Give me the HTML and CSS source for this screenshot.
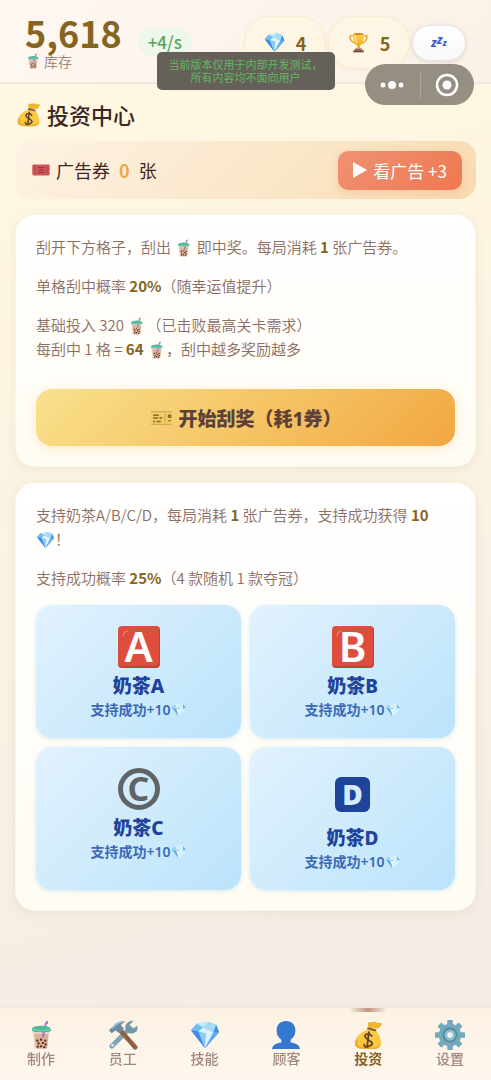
FILE: index.html
```html
<!DOCTYPE html>
<html lang="zh-CN">
<head>
    <meta charset="UTF-8">
    <meta name="viewport" content="width=device-width, initial-scale=1.0">
    <title>投资中心</title>
    <link rel="stylesheet" href="styles.css">
</head>
<body>
    <!-- Shared icons -->
    <svg class="sprite" aria-hidden="true">
        <defs>
            <linearGradient id="gem" x1="0" y1="0" x2="1" y2="1">
                <stop offset="0" stop-color="#8fd3f7"/>
                <stop offset="1" stop-color="#2f7fe0"/>
            </linearGradient>
            <linearGradient id="gold" x1="0" y1="0" x2="0" y2="1">
                <stop offset="0" stop-color="#ffd54a"/>
                <stop offset="1" stop-color="#f2a01f"/>
            </linearGradient>
        </defs>
        <symbol id="tea" viewBox="0 0 32 32">
            <path d="M7 11h18l-2 18q-.3 2-2 2h-10q-1.700 0-2-2z" fill="#e9d5c8"/>
            <path d="M9 15h15l-1.500 14q-.2 1.500-1.500 1.500h-9q-1.300 0-1.500-1.500z" fill="#deb193"/>
            <path d="M17 16 20.500 2.500q.3-1.500 3-1.500v3l-1.500.5L19 19h-2z" fill="#a77bc8"/>
            <path d="M6.500 9Q8 6 16.500 6T26 9l1 2q0 2-10.500 2T6 11z" fill="#4fb99a"/>
            <path d="M7 10q9 3 19 0" fill="none" stroke="#80d8bd"/>
            <g fill="#493029">
                <circle cx="12" cy="22" r="1.200"/><circle cx="16" cy="21" r="1.200"/><circle cx="20.500" cy="22" r="1.200"/>
                <circle cx="13.500" cy="25" r="1.200"/><circle cx="18" cy="24.500" r="1.200"/><circle cx="21" cy="26" r="1.200"/>
                <circle cx="12.500" cy="28.500" r="1.200"/><circle cx="16" cy="28" r="1.200"/><circle cx="19.500" cy="29" r="1.200"/>
            </g>
        </symbol>
        <symbol id="diamond" viewBox="0 0 32 32">
            <path d="M1 11 7 4 20 2l8 3 3 8-15 17z" fill="url(#gem)"/>
            <path d="M7 4 20 2l-6 6z" fill="#c7ecfc"/>
            <path d="M7 4 1 11l8 1 5-4z" fill="#71bdf0"/>
            <path d="m20 2 8 3-3 8-11-5z" fill="#a6dcf9"/>
            <path d="m28 5 3 8h-6z" fill="#4292e8"/>
            <path d="m9 12 5-4 11 5-9 17z" fill="#dcf3ff"/>
            <path d="m1 11 8 1 7 18z" fill="#3f8ae6"/>
            <path d="m9 12 8 2-1 16z" fill="#8ec9f8"/>
            <path d="m25 13 6 0-15 17z" fill="#61adf2"/>
        </symbol>
        <!-- the small gem is pale in the middle and nearly melts into the tile -->
        <symbol id="diamond-pale" viewBox="0 0 32 32">
            <path d="M1 11 7 4 20 2l8 3 3 8-15 17z" fill="#d3effb"/>
            <path d="m1 10 9 3 7-2-4 7 2 11z" fill="#63aee5"/>
            <path d="m1 10 7-5 3 6z" fill="#92cff0"/>
            <path d="m10 13 9 1-3 14z" fill="#e6f8fd"/>
            <path d="m24 4 6 8-6 1z" fill="#68b2e6"/>
        </symbol>
        <symbol id="bag" viewBox="0 0 32 32">
            <path d="M17 9Q14 2 18 2q2 1 3 0t3 0 2 1 4 0q2 2-3 6z" fill="#efb62b"/>
            <path d="M15 10Q2 16 2 25q0 6 11 6h8q10 0 9-7-1-8-6-13z" fill="#fbc93f"/>
            <path d="M5 25q0 4 10 4h8q5-1 6-4 0 6-8 6h-8Q2 31 2 25q0-3 3-6z" fill="#f0ad27"/>
            <path d="m16 9 8 2" stroke="#76513b" stroke-width="2" stroke-linecap="round"/>
            <path d="M20 17q-2-3-5-2t-2 3 3 3 4 3-3 4-5-2M17 13l-2 16" fill="none" stroke="#5f422c" stroke-width="1.900" stroke-linecap="round"/>
        </symbol>
        <symbol id="trophy" viewBox="0 0 32 32">
            <path d="M9 6H3q0 9 8 11M23 6h6q0 9-8 11" fill="none" stroke="#e99b27" stroke-width="2"/>
            <path d="M8 3h16q1 15-6 18v4h-4v-4Q7 18 8 3z" fill="url(#gold)"/>
            <path d="M11 5q0 9 3 12" fill="none" stroke="#ffeb91" stroke-width="2"/>
            <ellipse cx="16" cy="3" rx="8" ry="1.500" fill="#d98b1e"/>
            <path d="M11 25h10l1 3H10z" fill="#9b5f4b"/>
            <path d="M8 28h16v3H8z" fill="#704236"/>
        </symbol>
        <symbol id="coupon" viewBox="0 0 32 20">
            <path d="M3 1h26l2 2-1 2 1 2-1 2 1 2-1 2 1 3-2 3H3l-2-3 1-3-1-2 1-2-1-2 1-2-1-2z" fill="#cb555b"/>
            <path d="M6 4v12M26 4v12" stroke="#a43e45" stroke-width="1.500" stroke-dasharray="2 1"/>
            <path d="M11 6h10M12 10h8M11 14h10" stroke="#8e3037" stroke-width="1.600"/>
        </symbol>
        <symbol id="ticket" viewBox="0 0 32 20">
            <path d="M1 1h30v3l-1 1 1 1v8l-1 1 1 1v3H1v-3l1-1-1-1V6l1-1-1-1z" fill="#f3cd64"/>
            <path d="M1 1h30M1 19h30" stroke="#b7914a"/>
            <path d="M4 6h8M4 10h7m2 0h4M4 15h3m2 0h6M26 6h3v3h-3zm0 8h3" stroke="#85682f" stroke-width="2" fill="none"/>
            <path d="M21 4v13" stroke="#a9853b" stroke-width="1.500" stroke-dasharray="2 2"/>
        </symbol>
        <symbol id="tools" viewBox="0 0 32 32">
            <path d="m4 28 18-18" stroke="#7ba4b5" stroke-width="5" stroke-linecap="round"/>
            <path d="M19 11q-2-6 3-9 3-2 5-1l-4 4 4 4 4-3q2 6-4 8-4 1-6-1z" fill="#6f9aac"/>
            <circle cx="5" cy="27" r="1.500" fill="#d8e9ee"/>
            <path d="m13 11 16 18" stroke="#925f43" stroke-width="5" stroke-linecap="round"/>
            <path d="m2 10 6-6q5-4 11-2-5 1-5 4l3 3-5 5-4-3-4 3-3-3z" fill="#648c9e"/>
            <path d="m4 9 5-4q3-3 7-3" fill="none" stroke="#9fc2cf" stroke-width="1.500"/>
        </symbol>
        <symbol id="person" viewBox="0 0 32 32">
            <path d="M16 1c6 0 10 4 10 10 0 5-2 8-5 10v3q9 1 10 7H1q1-6 10-7v-3c-3-2-5-5-5-10C6 5 10 1 16 1z" fill="#3477d0"/>
        </symbol>
        <symbol id="gear" viewBox="0 0 32 32">
            <g fill="#75a9bd">
                <rect x="13" y="0" width="6" height="32" rx="1"/>
                <rect x="13" y="0" width="6" height="32" rx="1" transform="rotate(45 16 16)"/>
                <rect x="13" y="0" width="6" height="32" rx="1" transform="rotate(90 16 16)"/>
                <rect x="13" y="0" width="6" height="32" rx="1" transform="rotate(135 16 16)"/>
                <circle cx="16" cy="16" r="12"/>
            </g>
            <circle cx="16" cy="16" r="7" fill="#8dbed0" stroke="#538ba3" stroke-width="2"/>
            <circle cx="16" cy="16" r="3" fill="#f4f4ee"/>
        </symbol>
    </svg>

    <header class="topbar">
        <div class="stock">
            <div class="stock-value">5,618</div>
            <div class="stock-label"><svg class="icon"><use href="#tea"/></svg>库存</div>
        </div>
        <span class="rate">+4/s</span>
        <div class="chips">
            <span class="chip"><svg class="icon"><use href="#diamond"/></svg>4</span>
            <span class="chip"><svg class="icon"><use href="#trophy"/></svg>5</span>
            <button type="button" class="sleep" aria-label="休息"><span>z</span><span>z</span><span>z</span></button>
        </div>
    </header>

    <div class="notice">当前版本仅用于内部开发测试，<br>所有内容均不面向用户</div>
    <div class="capsule">
        <button type="button" aria-label="更多">
            <svg width="24" height="10" viewBox="0 0 24 10" fill="#fff"><circle cx="3" cy="5" r="2.500"/><circle cx="12" cy="5" r="4"/><circle cx="21" cy="5" r="2.500"/></svg>
        </button>
        <button type="button" aria-label="关闭">
            <svg width="24" height="24" viewBox="0 0 24 24"><circle cx="12" cy="12" r="10" fill="none" stroke="#fff" stroke-width="2.500"/><circle cx="12" cy="12" r="4.500" fill="#fff"/></svg>
        </button>
    </div>

    <main>
        <h1><svg class="icon"><use href="#bag"/></svg>投资中心</h1>

        <section class="ad-bar">
            <svg class="coupon"><use href="#coupon"/></svg>
            <span>广告券</span><span class="ad-count">0</span><span>张</span>
            <button type="button" class="ad-button"><svg width="14" height="16" viewBox="0 0 14 16"><path d="M0 0v16l14-8z" fill="#fff"/></svg>看广告 +3</button>
        </section>

        <section class="card">
            <p>刮开下方格子，刮出 <svg class="icon"><use href="#tea"/></svg> 即中奖。每局消耗 <b>1</b> 张广告券。</p>
            <p>单格刮中概率 <b>20%</b>（随幸运值提升）</p>
            <p>基础投入 320 <svg class="icon"><use href="#tea"/></svg>（已击败最高关卡需求）<br>每刮中 1 格 = <b>64</b> <svg class="icon"><use href="#tea"/></svg>，刮中越多奖励越多</p>
            <button type="button" class="start"><svg class="ticket"><use href="#ticket"/></svg>开始刮奖（耗1券）</button>
        </section>

        <section class="card">
            <p>支持奶茶A/B/C/D，每局消耗 <b>1</b> 张广告券，支持成功获得 <b>10</b> <span class="keep"><svg class="icon"><use href="#diamond"/></svg>！</span></p>
            <p>支持成功概率 <b>25%</b>（4 款随机 1 款夺冠）</p>
            <div class="options">
                <button type="button" class="option">
                    <span class="mark"><span class="letter red">A</span></span>
                    <span class="name">奶茶A</span>
                    <span class="reward">支持成功+10<svg class="icon"><use href="#diamond-pale"/></svg></span>
                </button>
                <button type="button" class="option">
                    <span class="mark"><span class="letter red">B</span></span>
                    <span class="name">奶茶B</span>
                    <span class="reward">支持成功+10<svg class="icon"><use href="#diamond-pale"/></svg></span>
                </button>
                <button type="button" class="option">
                    <span class="mark"><span class="letter round">C</span></span>
                    <span class="name">奶茶C</span>
                    <span class="reward">支持成功+10<svg class="icon"><use href="#diamond-pale"/></svg></span>
                </button>
                <button type="button" class="option">
                    <span class="mark tall"><span class="letter blue">D</span></span>
                    <span class="name">奶茶D</span>
                    <span class="reward">支持成功+10<svg class="icon"><use href="#diamond-pale"/></svg></span>
                </button>
            </div>
        </section>
    </main>

    <nav class="tabs">
        <a href="#make"><svg class="icon"><use href="#tea"/></svg>制作</a>
        <a href="#staff"><svg class="icon"><use href="#tools"/></svg>员工</a>
        <a href="#skill"><svg class="icon"><use href="#diamond"/></svg>技能</a>
        <a href="#guest"><svg class="icon"><use href="#person"/></svg>顾客</a>
        <a href="#invest" class="active"><svg class="icon"><use href="#bag"/></svg>投资</a>
        <a href="#settings"><svg class="icon"><use href="#gear"/></svg>设置</a>
    </nav>
</body>
</html>
```
FILE: styles.css
```css
* {
    box-sizing: border-box;
}

body {
    margin: 0;
    min-height: 100vh;
    font-family: 'Noto Sans CJK SC', sans-serif;
    color: #3e2723;
    background: linear-gradient(165deg, #fff8e1 0%, #fdf5e2 30%, #f3ebe6 100%);
}

button {
    border: none;
    padding: 0;
    font-family: inherit;
    cursor: pointer;
}

.sprite {
    position: absolute;
    width: 0;
    height: 0;
}

.icon {
    width: 16px;
    height: 16px;
    flex: none;
}

/* Header */
.topbar {
    display: flex;
    height: 84px;
    padding: 0 25px;
    background: linear-gradient(135deg, #fff8f2, #faf1e7);
    border-bottom: 2px solid #f0e8df;
}

.stock {
    padding-top: 13px;
}

.stock-value {
    font-size: 36px;
    font-weight: 700;
    line-height: 38px;
    color: #856522;
}

.stock-label {
    display: flex;
    align-items: center;
    gap: 3px;
    font-size: 14px;
    line-height: 20px;
    color: #a1887f;
}

.rate {
    align-self: flex-start;
    margin: 28px 0 0 16px;
    padding: 0 10px;
    border-radius: 14px;
    font-size: 17px;
    font-weight: 500;
    line-height: 28px;
    color: #58a35b;
    background: #edf7ea;
}

.chips {
    display: flex;
    align-items: center;
    align-self: flex-start;
    gap: 2px;
    height: 53px;
    margin: 16px 0 0 auto;
}

.chip {
    display: flex;
    align-items: center;
    justify-content: center;
    gap: 11px;
    width: 82px;
    height: 53px;
    border: 1px solid #faecd0;
    border-radius: 27px;
    font-size: 18px;
    font-weight: 700;
    color: #856522;
    background: #fef6e4;
    box-shadow: 0 1px 4px rgba(240, 200, 120, 0.2);
}

.chip .icon {
    width: 21px;
    height: 21px;
}

.sleep {
    display: flex;
    align-items: center;
    justify-content: center;
    width: 54px;
    height: 36px;
    border: 1px solid #e8e4e4;
    border-radius: 18px;
    font-family: 'Noto Sans', sans-serif;
    font-size: 12px;
    font-style: italic;
    font-weight: 800;
    color: #3c61cc;
    background: linear-gradient(#ffffff, #f8f8fb);
    box-shadow: 0 1px 4px rgba(60, 40, 30, 0.15);
}

.sleep span:nth-child(2) {
    padding-bottom: 6px;
}

.sleep span:nth-child(3) {
    font-size: 9px;
}

/* Floating pieces over the header */
.notice {
    position: fixed;
    top: 52px;
    left: 50%;
    z-index: 2;
    width: 178px;
    margin-left: -89px;
    padding: 6px 0;
    border-radius: 5px;
    font-size: 11px;
    line-height: 13px;
    text-align: center;
    white-space: nowrap;
    color: #62b85d;
    background: #65605a;
}

.capsule {
    position: fixed;
    top: 64px;
    right: 17px;
    z-index: 2;
    display: flex;
    width: 109px;
    height: 41px;
    border-radius: 21px;
    background: rgba(118, 112, 102, 0.77);
}

.capsule button {
    flex: 1;
    display: flex;
    align-items: center;
    justify-content: center;
    background: none;
}

.capsule button + button {
    background: linear-gradient(#aaa49a, #aaa49a) left center / 1px 26px no-repeat;
}

/* Content */
main {
    padding: 14px 15px 96px;
}

h1 {
    display: flex;
    align-items: center;
    gap: 6px;
    margin: 0 0 11px;
    padding-left: 1px;
    font-size: 22px;
    font-weight: 500;
    line-height: 32px;
}

h1 .icon {
    width: 25px;
    height: 25px;
}

.ad-bar {
    display: flex;
    align-items: center;
    height: 58px;
    margin-bottom: 15px;
    padding: 0 14px 0 16px;
    border-radius: 16px;
    font-size: 18px;
    background: linear-gradient(135deg, #fdf2e3, #fae6c7 60%, #f8dab0);
}

.coupon {
    width: 20px;
    height: 12px;
    margin-right: 5px;
}

.ad-count {
    margin: 0 9px;
    font-weight: 700;
    color: #f0a848;
}

.ad-button {
    display: flex;
    align-items: center;
    gap: 6px;
    height: 39px;
    margin-left: auto;
    padding: 0 15px;
    border-radius: 10px;
    font-size: 17px;
    color: white;
    background: linear-gradient(135deg, #ef9273, #ee7850);
    box-shadow: 0 3px 10px rgba(238, 120, 80, 0.2);
}

.card {
    margin-bottom: 15px;
    padding: 20px;
    border: 1px solid #fbf5e9;
    border-radius: 20px;
    font-size: 15px;
    font-weight: 350;
    line-height: 24px;
    color: #8d6e63;
    background: linear-gradient(#ffffff, #fffcf3);
    box-shadow: 0 2px 10px rgba(130, 100, 50, 0.1);
}

.card p {
    margin: 0 0 15px;
}

.card p .icon {
    width: 19px;
    height: 18px;
    vertical-align: -4px;
}

.card b {
    font-weight: 700;
    color: #856522;
}

.keep {
    white-space: nowrap;
}

.start {
    display: flex;
    align-items: center;
    justify-content: center;
    gap: 6px;
    width: 100%;
    height: 57px;
    margin-top: 28px;
    border-radius: 16px;
    font-family: 'Noto Sans', 'Noto Sans CJK SC', sans-serif;
    font-size: 19px;
    font-weight: 800;
    color: #5d4037;
    background: linear-gradient(135deg, #f9e18d, #f5c566 50%, #f2a742);
    box-shadow: 0 3px 12px rgba(242, 167, 66, 0.2);
}

.ticket {
    width: 23px;
    height: 14px;
}

.options {
    display: grid;
    grid-template-columns: 1fr 1fr;
    gap: 9px;
}

.option {
    display: flex;
    flex-direction: column;
    align-items: center;
    padding: 18px 8px;
    border-radius: 16px;
    font-family: 'Noto Sans', 'Noto Sans CJK SC', sans-serif;
    color: #1e439b;
    background: linear-gradient(135deg, #e2f2fd, #bbe3fb);
    box-shadow: 0 1px 4px rgba(100, 170, 220, 0.25);
}

.mark {
    display: flex;
    align-items: center;
    height: 48px;
    margin-bottom: 3px;
}

.tall {
    height: 58px;
}

.letter {
    display: flex;
    align-items: center;
    justify-content: center;
    width: 42px;
    height: 42px;
    font-weight: 600;
    line-height: 1;
    color: white;
}

.red {
    border-radius: 4px;
    padding-bottom: 2px;
    font-size: 42px;
    background: radial-gradient(circle at 10px 10px, transparent 4px, #ef8377 5px, transparent 6px) 0 0 / 10px 10px no-repeat, #df4d3e;
    box-shadow: inset -1px -2px 1px #b94538;
}

.round {
    border: 5px solid #616467;
    border-radius: 50%;
    padding-bottom: 2px;
    font-size: 34px;
    font-weight: 700;
    color: #616467;
}

.blue {
    width: 35px;
    height: 35px;
    border-radius: 6px;
    font-size: 28px;
    font-weight: 900;
    color: #d3ebfb;
    background: #1e439b;
}

.name {
    font-size: 19px;
    font-weight: 800;
    line-height: 24px;
}

.reward {
    display: flex;
    align-items: center;
    margin-top: 2px;
    font-size: 14px;
    font-weight: 600;
    line-height: 20px;
    color: #3b69b6;
}

/* Bottom tabs */
.tabs {
    position: fixed;
    right: 0;
    bottom: 0;
    left: 0;
    display: flex;
    height: 72px;
    background: linear-gradient(#fcf2e3, #fff6ef);
    box-shadow: 0 -1px 4px rgba(120, 80, 60, 0.05);
}

.tabs a {
    position: relative;
    flex: 1;
    display: flex;
    flex-direction: column;
    align-items: center;
    padding-top: 12px;
    font-size: 14px;
    font-weight: 500;
    line-height: 16px;
    text-decoration: none;
    color: #a1887f;
}

.tabs .icon {
    width: 30px;
    height: 30px;
}

.tabs .active {
    font-weight: 700;
    color: #856522;
}

.active::before {
    content: '';
    position: absolute;
    top: 0;
    width: 38px;
    height: 4px;
    background: linear-gradient(90deg, transparent, #bd967d, transparent);
}
```
